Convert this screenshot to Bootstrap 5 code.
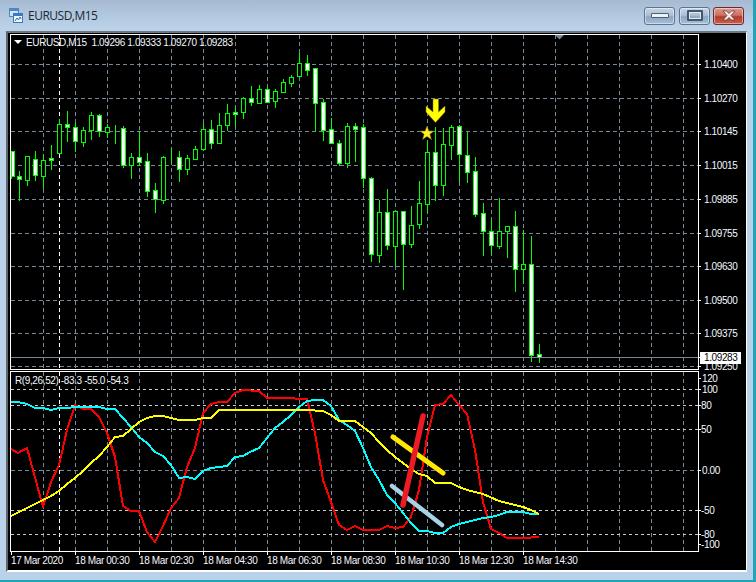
<!DOCTYPE html>
<html lang="en">
<head>
  <meta charset="UTF-8">
  <meta name="viewport" content="width=device-width, initial-scale=1">
  <title>EURUSD,M15</title>
  <link href="https://cdn.jsdelivr.net/npm/bootstrap@5.3.3/dist/css/bootstrap.min.css" rel="stylesheet">
  <style>
    html, body { height: 100%; background: #b9d2e9; overflow: hidden; }
    .mt-window { width: 756px; height: 582px; border-right: 3px solid #1fa5b5; border-bottom: 2px solid #1fa5b5; border-top-left-radius: 3px; background: #b9d2e9; }
    .mt-title { height: 31px; padding: 0 9px 0 9px; background: linear-gradient(#a6bbd2, #bdd5ec); }
    .mt-title span { font: 12px "Open Sans", sans-serif; letter-spacing: -.5px; color: #1c2733; margin-left: 5px; }
    .wc-btn { width: 31px; height: 18px; padding: 0; border: 1px solid #5f7389; border-radius: 3px; background: linear-gradient(#c6d6e8 0, #a9bfd7 45%, #8aa6c4 55%, #a9c1da 100%); display: flex; align-items: center; justify-content: center; box-shadow: inset 0 0 0 1px rgba(255,255,255,.45); }
    .wc-btn:hover { background: linear-gradient(#c6d6e8 0, #a9bfd7 45%, #8aa6c4 55%, #a9c1da 100%); }
    .wc-close { margin-left: 3px; border-color: #6d2a2a; background: linear-gradient(#dd9a90 0, #cf6f62 45%, #b33a2c 55%, #c9614f 100%); }
    .wc-close:hover { background: linear-gradient(#dd9a90 0, #cf6f62 45%, #b33a2c 55%, #c9614f 100%); }
    .wc-min { width: 18px; height: 5px; background: #eef2f6; border: 1px solid #4d5f73; border-radius: 1px; }
    .wc-max { width: 16px; height: 11px; background: transparent; border: 2px solid #46566a; outline: 1px solid #dfe7ef; outline-offset: -3px; border-radius: 1px; }
    .mt-client { margin-left: 6px; width: 741px; height: 541px; border-left: 2px solid #5f6468; border-top: 2px solid #6f7680; border-right: 1px solid #fff; border-bottom: 2px solid #fff; background: #000; }
    .mt-client svg { display: block; }
    .mt-client text { font-family: "Liberation Sans", sans-serif; font-size: 10px; letter-spacing: -.38px; fill: #f4f8ff; }
    .grid-main { stroke: #778899; stroke-dasharray: 4 3; shape-rendering: crispEdges; }
    .grid-sep { stroke: #fff; stroke-dasharray: 4 3; shape-rendering: crispEdges; }
    .grid-level { stroke: #c8c8c8; stroke-dasharray: 3 3; shape-rendering: crispEdges; }
    .axis-line { stroke: #fff; shape-rendering: crispEdges; }
    .osc-line { fill: none; stroke-width: 2; stroke-linejoin: round; shape-rendering: crispEdges; }
  </style>
</head>
<body>
<div class="mt-window d-flex flex-column">
  <div class="mt-title d-flex align-items-center">
    <svg width="14" height="15" viewBox="0 0 14 15">
      <rect x="0.5" y="0.5" width="9" height="8" fill="#cfe2f6" stroke="#4f86c6"/>
      <rect x="1" y="1" width="8" height="2" fill="#4f86c6"/>
      <rect x="4.5" y="5.5" width="9" height="9" fill="#eef5fc" stroke="#3b78c0"/>
      <rect x="5" y="6" width="8" height="2" fill="#3b78c0"/>
      <path d="M6 13l2-3 1.5 2 1.5-3 1 2" fill="none" stroke="#2f6fb8"/>
    </svg>
    <span>EURUSD,M15</span>
    <div class="d-flex ms-auto">
      <button class="btn wc-btn me-1" type="button" aria-label="Minimize"><div class="wc-min"></div></button>
      <button class="btn wc-btn" type="button" aria-label="Maximize"><div class="wc-max"></div></button>
      <button class="btn wc-btn wc-close" type="button" aria-label="Close">
        <svg width="16" height="11" viewBox="0 0 16 11"><path d="M2 1h3.5L8 3.5 10.5 1H14l-4 4.5L14 10h-3.5L8 7.5 5.500 10H2l4-4.500z" fill="#f4f0ee" stroke="#6b3a36" stroke-width=".8"/></svg>
      </button>
    </div>
  </div>
  <div class="mt-client">
    <svg id="chart" width="738" height="539" viewBox="8 33 738 539" xmlns="http://www.w3.org/2000/svg"></svg>
  </div>
</div>

<script>
  // hi, lo, body top, body bottom, white body
  const candles = [
    [151,178,151,176,1],[171,200,176,179,1],[156,185,156,180,0],[151,180,159,175,1],[154,188,160,176,0],
    [145,169,158,160,1],[119,153,124,153,0],[111,141,124,127,1],[123,151,127,141,1],[127,146,130,142,0],
    [112,139,115,130,0],[114,136,115,131,1],[124,137,127,132,0],[125,143,128,128,0],[126,167,128,165,1],
    [153,178,157,165,0],[131,165,157,162,1],[153,196,161,191,1],[183,212,190,199,1],[156,203,157,200,0],
    [148,163,157,157,0],[151,181,157,169,1],[155,174,158,169,0],[146,159,149,159,0],[123,150,129,149,0],
    [120,148,129,143,1],[113,143,125,143,0],[104,130,113,125,0],[107,125,112,114,1],[97,118,98,112,0],
    [86,105,98,102,1],[85,103,89,103,0],[87,102,89,102,1],[89,107,91,101,0],[79,92,82,92,0],
    [75,86,77,83,0],[53,76,63,76,0],[55,75,63,70,1],[68,130,68,103,1],[99,140,102,130,1],
    [118,143,129,143,1],[140,165,143,163,1],[123,167,126,163,0],[123,161,126,129,1],[124,187,127,178,1],
    [177,261,178,254,1],[200,262,212,255,0],[189,249,212,245,1],[211,265,211,246,0],[211,289,211,244,1],
    [206,247,225,244,0],[181,228,203,224,0],[140,212,152,204,0],[127,200,152,185,1],[128,195,144,185,0],
    [125,159,127,145,0],[125,181,126,154,1],[132,182,155,172,1],[157,216,171,214,1],[203,255,213,231,1],
    [219,253,231,245,1],[198,248,231,246,0],[226,257,226,231,0],[211,291,226,269,1],[230,283,264,269,0],
    [236,361,264,355,1],[344,362,354,357,1]
  ];

  const redLine = [[11,449],[18,453],[27,448],[43,507],[51,482],[59,465],[67,430],[75,405],[83,409],[91,409],[99,417],[107,433],[115,457],[123,506],[131,511],[139,511],[147,532],[155,542],[163,526],[171,508],[179,498],[187,467],[195,448],[203,413],[211,404],[219,402],[227,402],[235,393],[243,390],[259,391],[267,398],[283,398],[307,399],[315,433],[323,480],[331,502],[339,525],[347,530],[355,526],[363,530],[379,530],[387,526],[395,528],[403,527],[411,517],[419,490],[427,437],[435,405],[443,404],[451,395],[459,405],[467,414],[475,450],[483,502],[491,529],[499,533],[507,538],[523,538],[539,537]];
  const cyanLine = [[11,402],[18,402],[27,404],[35,408],[43,408],[51,410],[59,408],[67,408],[75,407],[99,407],[107,409],[115,409],[123,418],[131,427],[139,437],[147,443],[155,452],[163,456],[171,465],[179,478],[187,477],[195,479],[203,471],[211,468],[219,467],[227,466],[235,457],[243,456],[250,452],[259,448],[267,438],[275,428],[283,422],[291,415],[299,407],[307,401],[315,400],[323,400],[331,406],[339,420],[347,425],[355,431],[363,448],[371,467],[379,480],[387,495],[395,503],[403,513],[411,523],[419,531],[427,531],[435,533],[443,533],[451,527],[459,524],[467,522],[475,520],[483,518],[491,517],[499,515],[507,512],[523,512],[531,514],[539,514]];
  const yellowLine = [[11,516],[19,512],[27,508],[35,504],[43,500],[51,496],[59,491],[67,484],[75,478],[83,471],[91,463],[99,456],[107,447],[115,437],[123,436],[131,429],[139,422],[147,418],[155,416],[163,416],[171,418],[179,420],[195,420],[203,418],[211,418],[219,410],[307,410],[323,411],[331,415],[339,421],[355,421],[363,427],[371,433],[379,442],[387,450],[395,457],[403,463],[411,469],[419,474],[427,476],[435,483],[451,483],[459,487],[467,490],[475,492],[483,494],[490,497],[499,501],[507,503],[515,505],[523,507],[531,510],[539,514]];

  const priceLabels = [[64,"1.10400"],[98,"1.10270"],[131,"1.10145"],[165,"1.10015"],[199,"1.09885"],[233,"1.09755"],[266,"1.09630"],[300,"1.09500"],[333,"1.09375"],[366,"1.09250"]];
  const oscLabels = [[389,"100"],[405,"80"],[429,"50"],[470,"0.00"],[510,"-50"],[534,"-80"]];
  const timeLabels = ["17 Mar 2020","18 Mar 00:30","18 Mar 02:30","18 Mar 04:30","18 Mar 06:30","18 Mar 08:30","18 Mar 10:30","18 Mar 12:30","18 Mar 14:30"];

  let out = "";
  const line = (x1, y1, x2, y2, cls, extra = "") =>
    `<line x1="${x1}" y1="${y1}" x2="${x2}" y2="${y2}" class="${cls}" ${extra}/>`;
  const label = (x, y, txt, extra = "") => `<text x="${x}" y="${y}" ${extra}>${txt}</text>`;

  // grid
  for (let x = 43; x <= 683; x += 32) {
    out += line(x + .5, 35, x + .5, 369, "grid-main") + line(x + .5, 372, x + .5, 551, "grid-main");
  }
  out += line(59.5, 35, 59.5, 369, "grid-sep") + line(59.5, 372, 59.5, 551, "grid-sep");
  priceLabels.forEach(([y]) => { out += line(11, y + .5, 698, y + .5, "grid-main"); });
  oscLabels.forEach(([y, t]) => { out += line(11, y + .5, 698, y + .5, t === "0.00" ? "grid-main" : "grid-level"); });

  // candles
  candles.forEach((c, i) => {
    const cx = 11 + i * 8;
    const [hi, lo, top, bot, white] = c;
    out += line(cx + .5, hi, cx + .5, lo + 1, "", 'stroke="#00ff00" shape-rendering="crispEdges"');
    out += `<rect x="${Math.max(cx - 1.5, 11.5)}" y="${top + .5}" width="${cx - 1.5 < 11.5 ? 2.500 : 4}" height="${bot - top}" fill="${white ? "#fff" : "#000"}" stroke="#00ff00" shape-rendering="crispEdges"/>`;
  });

  // bid line
  out += line(11, 357.5, 698, 357.5, "", 'stroke="#778899" shape-rendering="crispEdges"');

  // frames of the two panes
  out += `<rect x="10.500" y="34.500" width="688" height="335" fill="none" class="axis-line"/>`;
  out += `<rect x="10.500" y="371.500" width="688" height="180" fill="none" class="axis-line"/>`;

  // oscillator
  const pts = arr => arr.map(p => p.join(",")).join(" ");
  out += `<polyline points="${pts(redLine)}" class="osc-line" stroke="#ff0000"/>`;
  out += `<polyline points="${pts(cyanLine)}" class="osc-line" stroke="#00ffff"/>`;
  out += `<polyline points="${pts(yellowLine)}" class="osc-line" stroke="#ffff00"/>`;

  // hand drawn marks
  out += `<line x1="393" y1="437" x2="443" y2="473" stroke="#ffe900" stroke-width="5" stroke-linecap="round"/>`;
  out += `<line x1="392" y1="486" x2="442" y2="525" stroke="#a6d4e6" stroke-width="4.500" stroke-linecap="round"/>`;
  out += `<line x1="403" y1="505" x2="423" y2="416" stroke="#ed1c24" stroke-width="5.500" stroke-linecap="round"/>`;

  // arrow and star
  out += `<path d="M433 99h5.500v13l6.500-6v6l-9.500 10.500L426 112v-6l7 6z" fill="#ffff00" stroke="#8a7a00" stroke-width=".5"/>`;
  out += `<path d="M427 126l1.900 5h5.100l-4.100 3.200 1.600 5.300-4.500-3.100-4.500 3.100 1.600-5.300-4.100-3.200h5.100z" fill="#ffee22" stroke="#6d6500" stroke-width=".5"/>`;

  // price axis
  priceLabels.forEach(([y, t]) => {
    out += line(698, y + .5, 701, y + .5, "axis-line") + label(704, y + 3.500, t);
  });
  out += `<rect x="700" y="352" width="41" height="12" fill="#fff"/>`;
  out += `<text x="704" y="361" style="fill:#000">1.09283</text>`;
  out += line(698, 357.5, 701, 357.5, "axis-line");

  [[378,"120"],[389,"100"],[405,"80"],[429,"50"],[470,"0.00"],[510,"-50"],[534,"-80"],[544,"-100"]].forEach(([y, t]) => {
    out += line(698, y + .5, 701, y + .5, "axis-line") + label(t[0] === "-" || t.length === 2 ? 701 : 702, y + 4, t);
  });

  // time axis
  timeLabels.forEach((t, i) => {
    const x = 11 + i * 64;
    out += line(x + .5, 552, x + .5, 555, "axis-line") + label(x, 564, t);
  });

  // header texts and small triangles
  out += `<path d="M14 40h8l-4 4z" fill="#fff"/>`;
  out += `<path d="M555 35h9l-4.500 4.500z" fill="#778899"/>`;
  out += label(26, 46, "EURUSD,M15&#160;&#160;1.09296 1.09333 1.09270 1.09283");
  out += label(15, 384, "R(9,26,52) -83.3 -55.0 -54.3");

  document.getElementById("chart").innerHTML = out;
</script>
<script src="https://cdn.jsdelivr.net/npm/bootstrap@5.3.3/dist/js/bootstrap.bundle.min.js"></script>
</body>
</html>
